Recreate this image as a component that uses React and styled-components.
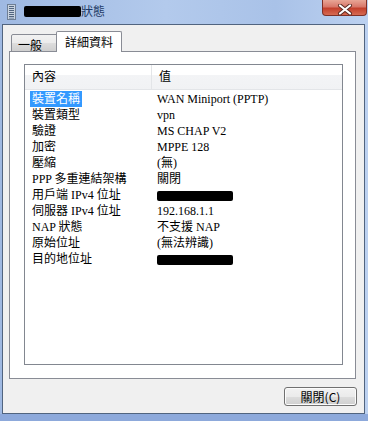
import styled, { createGlobalStyle } from "styled-components";

const rows = [
  { label: "裝置名稱", value: "WAN Miniport (PPTP)", selected: true },
  { label: "裝置類型", value: "vpn" },
  { label: "驗證", value: "MS CHAP V2" },
  { label: "加密", value: "MPPE 128" },
  { label: "壓縮", value: "(無)" },
  { label: "PPP 多重連結架構", value: "關閉" },
  { label: "用戶端 IPv4 位址", redacted: true },
  { label: "伺服器 IPv4 位址", value: "192.168.1.1" },
  { label: "NAP 狀態", value: "不支援 NAP" },
  { label: "原始位址", value: "(無法辨識)" },
  { label: "目的地位址", redacted: true },
];

export default function App() {
  return (
    <>
      <GlobalStyle />
      <Window>
        <TitleBar>
          <svg width="9" height="16" viewBox="0 0 9 16">
            <rect x="0.5" y="0.5" width="8" height="15" fill="#c9d3df" stroke="#6f7f95" />
            <path d="M2 2.5h5M2 4.5h5M2 6.5h5M2 8.5h5M2 10.5h5M2 12.5h5" stroke="#52657f" strokeWidth="1" />
            <rect x="2" y="13.5" width="5" height="1.5" fill="#8fa0b6" />
          </svg>
          <Title>
            <Redacted $w={57} $h={11} />
            狀態
          </Title>
          <CloseButton>
            <svg width="16" height="11" viewBox="0 0 16 11">
              <path d="M3 1.5l10 8M13 1.5l-10 8" stroke="#5a2a22" strokeWidth="4" strokeLinecap="round" />
              <path d="M3 1.5l10 8M13 1.5l-10 8" stroke="#ffffff" strokeWidth="2.2" strokeLinecap="round" />
            </svg>
          </CloseButton>
        </TitleBar>
        <Client>
          <Tabs>
            <Tab>一般</Tab>
            <Tab $active>詳細資料</Tab>
          </Tabs>
          <Panel>
            <ListView>
              <Header>
                <HeaderCell $w={127}>內容</HeaderCell>
                <HeaderCell>值</HeaderCell>
              </Header>
              {rows.map((r) => (
                <Row key={r.label}>
                  <LabelCell>
                    <Label $selected={r.selected}>{r.label}</Label>
                  </LabelCell>
                  <ValueCell>
                    {r.redacted ? <Redacted $w={76} $h={10} /> : r.value}
                  </ValueCell>
                </Row>
              ))}
            </ListView>
          </Panel>
          <Footer>
            <Button>關閉(C)</Button>
          </Footer>
        </Client>
      </Window>
    </>
  );
}

const GlobalStyle = createGlobalStyle`
  body {
    margin: 0;
    background: #ffffff;
  }
`;

const Window = styled.div`
  width: 368px;
  height: 421px;
  box-sizing: border-box;
  display: flex;
  flex-direction: column;
  padding: 0 3px 7px 2px;
  background: linear-gradient(90deg, #9fb9e2 0%, #b3caec 45%, #a9c2e8 75%, #bcd1f0 100%);
  font-family: "Noto Sans CJK TC", "Liberation Sans", sans-serif;
  box-shadow: inset 0 -7px 0 #8da9db;
`;

const TitleBar = styled.div`
  height: 24px;
  display: flex;
  align-items: flex-start;
  padding-left: 5px;
  gap: 8px;

  svg {
    margin-top: 4px;
  }
`;

const Title = styled.div`
  display: flex;
  align-items: center;
  margin-top: 4px;
  font-size: 12px;
  line-height: 14px;
  color: #1e3a66;
`;

const Redacted = styled.span`
  display: inline-block;
  width: ${(p) => p.$w}px;
  height: ${(p) => p.$h}px;
  background: #000000;
  border-radius: 2px;
  vertical-align: middle;
`;

const CloseButton = styled.div`
  margin-left: auto;
  margin-right: -2px;
  width: 45px;
  height: 16px;
  box-sizing: border-box;
  display: flex;
  align-items: center;
  justify-content: center;
  border: 1px solid #7e3026;
  border-top: none;
  border-radius: 0 0 4px 4px;
  background: linear-gradient(180deg, #e8a696 0%, #d8786a 45%, #c3402c 55%, #d66a52 100%);
`;

const Client = styled.div`
  flex: 1;
  display: flex;
  flex-direction: column;
  border: 1px solid #51647f;
  background: #f0f0f0;
  padding: 7px 8px 0 6px;
`;

const Tabs = styled.div`
  display: flex;
  align-items: flex-end;
  padding-left: 2px;
  height: 20px;
  position: relative;
  z-index: 1;
  margin-bottom: -1px;
`;

const Tab = styled.div`
  box-sizing: border-box;
  height: ${(p) => (p.$active ? "21px" : "18px")};
  padding: ${(p) => (p.$active ? "2px 8px 0 8px" : "2px 15px 0 6px")};
  margin-left: ${(p) => (p.$active ? "-2px" : "0")};
  border: 1px solid #898c95;
  border-bottom: ${(p) => (p.$active ? "none" : "1px solid #898c95")};
  border-radius: 2px 2px 0 0;
  background: ${(p) =>
    p.$active ? "#ffffff" : "linear-gradient(180deg, #f2f2f2 0%, #ebebeb 50%, #dddddd 51%, #cfcfcf 100%)"};
  font-size: 12px;
  line-height: 15px;
  color: #000000;
`;

const Panel = styled.div`
  height: 328px;
  box-sizing: border-box;
  border: 1px solid #898c95;
  background: #ffffff;
  padding: 12px 12px 13px 14px;
  display: flex;
`;

const ListView = styled.div`
  flex: 1;
  border: 1px solid #828790;
  background: #ffffff;
  font-family: "Liberation Serif", "Noto Sans CJK TC", serif;
  font-size: 12px;
  color: #000000;
`;

const Header = styled.div`
  height: 24px;
  display: flex;
  background: linear-gradient(180deg, #ffffff 0%, #ffffff 40%, #f3f4f6 41%, #f1f2f4 100%);
  border-bottom: 1px solid #e3e5e8;
  margin-bottom: 1px;
`;

const HeaderCell = styled.div`
  box-sizing: border-box;
  ${(p) => (p.$w ? `width: ${p.$w}px; border-right: 1px solid #e3e5e8;` : "flex: 1;")}
  padding-left: 7px;
  display: flex;
  align-items: center;
  line-height: 14px;
`;

const Row = styled.div`
  height: 16px;
  display: flex;
  align-items: center;
`;

const LabelCell = styled.div`
  width: 127px;
  padding-left: 5px;
  box-sizing: border-box;
`;

const Label = styled.span`
  display: inline-block;
  padding: 1px 2px;
  line-height: 14px;
  background: ${(p) => (p.$selected ? "#3399ff" : "transparent")};
  color: ${(p) => (p.$selected ? "#ffffff" : "#000000")};
`;

const ValueCell = styled.div`
  flex: 1;
  padding-left: 5px;
  line-height: 14px;
  white-space: nowrap;
`;

const Footer = styled.div`
  display: flex;
  justify-content: flex-end;
  padding-top: 8px;
  margin-right: -1px;
`;

const Button = styled.div`
  width: 73px;
  height: 19px;
  box-sizing: border-box;
  border: 1px solid #707070;
  border-radius: 3px;
  background: linear-gradient(180deg, #f2f2f2 0%, #ebebeb 50%, #dddddd 51%, #cfcfcf 100%);
  box-shadow: inset 0 0 0 1px #fcfcfc;
  display: flex;
  align-items: center;
  justify-content: center;
  font-size: 12px;
  line-height: 14px;
  color: #000000;
`;
